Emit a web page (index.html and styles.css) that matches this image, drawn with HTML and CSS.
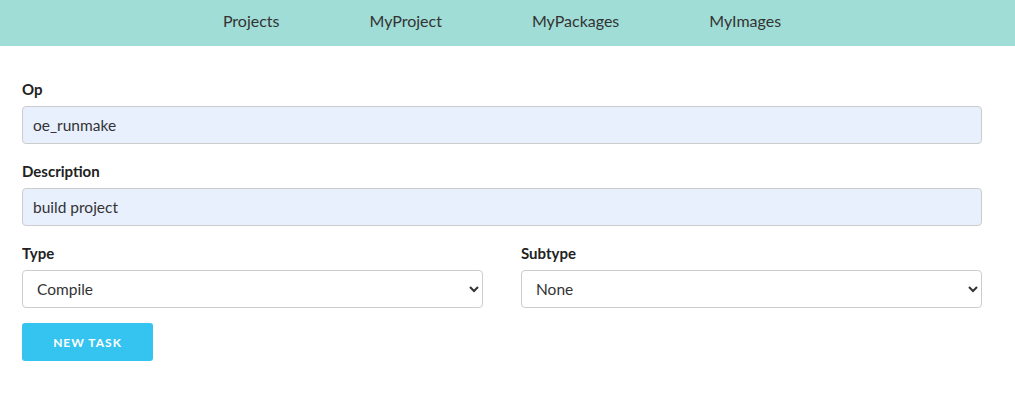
FILE: index.html
```html
<!DOCTYPE html>
<html lang="en">
<head>
<meta charset="utf-8">
<title>New Task</title>
<link rel="stylesheet" href="styles.css">
</head>
<body>
<header class="navbar">
  <nav class="nav-inner">
    <a class="nav-link" href="#">Projects</a>
    <a class="nav-link" href="#">MyProject</a>
    <a class="nav-link" href="#">MyPackages</a>
    <a class="nav-link" href="#">MyImages</a>
  </nav>
</header>
<main class="container">
  <form class="task-form">
    <div class="field">
      <label class="label" for="op">Op</label>
      <input class="input autofilled" id="op" type="text" value="oe_runmake">
    </div>
    <div class="field">
      <label class="label" for="desc">Description</label>
      <input class="input autofilled" id="desc" type="text" value="build project">
    </div>
    <div class="row">
      <div class="field">
        <label class="label" for="type">Type</label>
        <select class="select" id="type">
          <option>Compile</option>
        </select>
      </div>
      <div class="field">
        <label class="label" for="subtype">Subtype</label>
        <select class="select" id="subtype">
          <option>None</option>
        </select>
      </div>
    </div>
    <div class="actions">
      <button class="btn" type="button">New Task</button>
    </div>
  </form>
</main>
</body>
</html>
```
FILE: styles.css
```css
* { box-sizing: border-box; }
html, body { margin: 0; padding: 0; background: #fff; }
body {
  font-family: Lato, "Open Sans", sans-serif;
  font-size: 15px;
  color: #333;
}
.navbar {
  background: #a0ddd6;
  height: 46px;
}
.nav-inner {
  width: 960px;
  margin-left: 22px;
  height: 46px;
  display: flex;
  justify-content: center;
  align-items: center;
}
.nav-link {
  padding: 0 45px;
  color: #333;
  text-decoration: none;
  font-size: 16px;
  line-height: 20px;
  margin-top: -4px;
}
.container {
  width: 960px;
  margin-left: 22px;
  padding-top: 32px;
}
.task-form {
  display: flex;
  flex-direction: column;
  gap: 16px;
}
.field {
  display: flex;
  flex-direction: column;
}
.label {
  font-weight: 700;
  color: #222;
  font-size: 15px;
  line-height: 22px;
  margin-bottom: 6px;
}
.input, .select {
  height: 38px;
  border: 1px solid #ccc;
  border-radius: 4px;
  font-family: inherit;
  font-size: 15.5px;
  color: #333;
  padding: 0 10px;
  width: 100%;
}
.autofilled { background: #e8f0fe; }
.select { background: #fff; padding: 0 10px; }
.row {
  display: grid;
  grid-template-columns: 1fr 1fr;
  column-gap: 38px;
}
.actions { margin-top: -1px; }
.btn {
  height: 38px;
  width: 131px;
  border: none;
  border-radius: 3px;
  background: #35c4f0;
  color: #fff;
  font-family: inherit;
  font-weight: 700;
  font-size: 12px;
  letter-spacing: 1px;
  text-transform: uppercase;
}
```
